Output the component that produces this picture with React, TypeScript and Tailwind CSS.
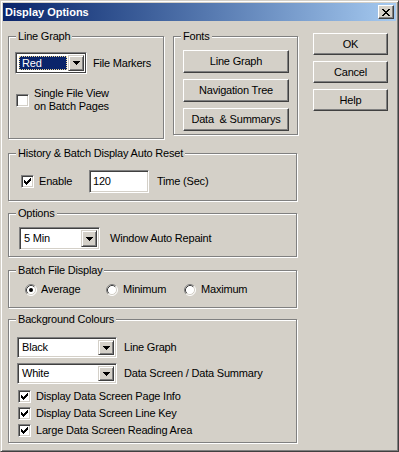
import React from "react";

const raised =
  "border border-t-white border-l-white border-r-[#404040] border-b-[#404040] shadow-[inset_-1px_-1px_0_#808080]";
const sunken =
  "border border-t-[#808080] border-l-[#808080] border-r-white border-b-white shadow-[inset_1px_1px_0_#404040,inset_-1px_-1px_0_#d4d0c8]";

function Check({ checked }: { checked?: boolean }) {
  return (
    <span className={`relative inline-block w-[13px] h-[13px] shrink-0 bg-white ${sunken}`}>
      {checked && (
        <svg width="7" height="7" viewBox="0 0 7 7" className="absolute left-[2px] top-[2px]" shapeRendering="crispEdges">
          <path
            fill="#000"
            d="M6 0h1v1h-1z M5 1h2v1h-2z M0 2h1v1h-1z M4 2h3v1h-3z M0 3h2v1h-2z M3 3h3v1h-3z M0 4h5v1h-5z M1 5h3v1h-3z M2 6h1v1h-1z"
          />
        </svg>
      )}
    </span>
  );
}

function Radio({ checked }: { checked?: boolean }) {
  return (
    <svg width="12" height="12" viewBox="0 0 12 12" className="shrink-0">
      <circle cx="6" cy="6" r="5" fill="#fff" />
      <path d="M9.89 2.11 A5.5 5.5 0 0 0 2.11 9.89" stroke="#808080" fill="none" />
      <path d="M2.11 9.89 A5.5 5.5 0 0 0 9.89 2.11" stroke="#fff" fill="none" />
      <path d="M9.18 2.82 A4.5 4.5 0 0 0 2.82 9.18" stroke="#404040" fill="none" />
      <path d="M2.82 9.18 A4.5 4.5 0 0 0 9.18 2.82" stroke="#d4d0c8" fill="none" />
      {checked && <circle cx="6" cy="6" r="2" fill="#000" />}
    </svg>
  );
}

function Arrow() {
  return (
    <svg width="7" height="4" viewBox="0 0 7 4" shapeRendering="crispEdges">
      <path fill="#000" d="M0 0h7v1h-7z M1 1h5v1h-5z M2 2h3v1h-3z M3 3h1v1h-1z" />
    </svg>
  );
}

function Combo({ value, className, focused }: { value: string; className: string; focused?: boolean }) {
  return (
    <div
      className={`flex p-[2px] bg-white border border-t-[#808080] border-l-[#808080] border-r-white border-b-white ${
        focused ? "shadow-[inset_0_0_0_1px_#404040]" : "shadow-[inset_1px_1px_0_#404040,inset_-1px_-1px_0_#d4d0c8]"
      } ${className}`}
    >
      <div className="flex-1 flex items-center min-w-0 p-[1px]">
        {focused ? (
          <div className="h-full w-full bg-[#0a246a] text-white flex items-center pl-[2px] border border-dotted border-[#f0d890]">
            {value}
          </div>
        ) : (
          <span className="pl-[1px]">{value}</span>
        )}
      </div>
      <div
        className="w-[16px] flex items-center justify-center bg-[#d4d0c8] border border-t-[#d4d0c8] border-l-[#d4d0c8] border-r-[#404040] border-b-[#404040] shadow-[inset_1px_1px_0_#fff,inset_-1px_-1px_0_#808080]"
      >
        <Arrow />
      </div>
    </div>
  );
}

function Btn({ children, className }: { children: React.ReactNode; className: string }) {
  return (
    <div className={`flex items-center justify-center bg-[#d4d0c8] ${raised} ${className}`}>
      {children}
    </div>
  );
}

function Group({
  label,
  className,
  children,
}: {
  label: string;
  className: string;
  children?: React.ReactNode;
}) {
  return (
    <div className={`relative border border-[#808080] shadow-[inset_1px_1px_0_#fff,1px_1px_0_#fff] ${className}`}>
      <span className="absolute -top-[7px] left-[7px] px-[2px] bg-[#d4d0c8] leading-[13px] whitespace-nowrap">
        {label}
      </span>
      {children}
    </div>
  );
}

export default function App() {
  return (
    <div
      className="w-[399px] h-[452px] bg-[#d4d0c8] p-[2px] border border-t-[#d4d0c8] border-l-[#d4d0c8] border-r-[#404040] border-b-[#404040] shadow-[inset_1px_1px_0_#fff,inset_-1px_-1px_0_#808080] font-['Liberation_Sans',Arial,sans-serif] text-[11px] leading-[13px] text-black overflow-hidden"
    >
      <div className="h-[18px] flex items-center justify-between bg-linear-to-r from-[#0a246a] to-[#a6caf0] pl-[2px] pr-[2px]">
        <span className="text-white font-bold text-[11px]">Display Options</span>
        <div className={`w-[16px] h-[14px] flex items-center justify-center bg-[#d4d0c8] ${raised}`}>
          <svg width="8" height="7" viewBox="0 0 8 7" shapeRendering="crispEdges">
            <path
              fill="#000"
              d="M0 0h2v1h-2z M6 0h2v1h-2z M1 1h2v1h-2z M5 1h2v1h-2z M2 2h4v1h-4z M3 3h2v1h-2z M2 4h4v1h-4z M1 5h2v1h-2z M5 5h2v1h-2z M0 6h2v1h-2z M6 6h2v1h-2z"
            />
          </svg>
        </div>
      </div>

      <div className="pl-[5px] tracking-[-0.2px]">
        <div className="flex items-start mt-[12px]">
          <Group label="Line Graph" className="mt-[3px] w-[156px] h-[103px] pt-[15px] pl-[6px]">
            <div className="flex items-center">
              <Combo value="Red" focused className="w-[72px] h-[22px]" />
              <span className="ml-[6px]">File Markers</span>
            </div>
            <div className="flex items-center mt-[13px] ml-[1px]">
              <Check />
              <span className="ml-[5px]">
                Single File View
                <br />
                on Batch Pages
              </span>
            </div>
          </Group>

          <Group label="Fonts" className="mt-[3px] ml-[9px] w-[125px] h-[99px] pt-[13px] pl-[9px]">
            <div className="flex flex-col gap-[6px]">
              <Btn className="w-[106px] h-[23px]">Line Graph</Btn>
              <Btn className="w-[106px] h-[23px]">Navigation Tree</Btn>
              <Btn className="w-[106px] h-[23px]">Data&nbsp; &amp; Summarys</Btn>
            </div>
          </Group>

          <div className="ml-[15px] flex flex-col gap-[6px]">
            <Btn className="w-[75px] h-[22px]">OK</Btn>
            <Btn className="w-[75px] h-[22px]">Cancel</Btn>
            <Btn className="w-[75px] h-[22px]">Help</Btn>
          </div>
        </div>

        <Group label="History & Batch Display Auto Reset" className="mt-[14px] w-[289px] h-[48px] pt-[16px] pl-[12px]">
          <div className="flex items-center">
            <Check checked />
            <span className="ml-[5px] w-[50px]">Enable</span>
            <div className={`w-[60px] h-[23px] bg-white flex items-center pl-[3px] ${sunken}`}>120</div>
            <span className="ml-[8px]">Time (Sec)</span>
          </div>
        </Group>

        <Group label="Options" className="mt-[12px] w-[289px] h-[44px] pt-[13px] pl-[10px]">
          <div className="flex items-center">
            <Combo value="5 Min" className="w-[81px] h-[23px]" />
            <span className="ml-[10px]">Window Auto Repaint</span>
          </div>
        </Group>

        <Group label="Batch File Display" className="mt-[13px] w-[289px] h-[38px] pt-[12px] pl-[16px]">
          <div className="flex items-center">
            <div className="w-[81px] flex items-center">
              <Radio checked />
              <span className="ml-[4px]">Average</span>
            </div>
            <div className="w-[78px] flex items-center">
              <Radio />
              <span className="ml-[5px]">Minimum</span>
            </div>
            <div className="flex items-center">
              <Radio />
              <span className="ml-[5px]">Maximum</span>
            </div>
          </div>
        </Group>

        <Group label="Background Colours" className="mt-[11px] w-[289px] h-[124px] pt-[17px] pl-[8px]">
          <div className="flex flex-col gap-[5px]">
            <div className="flex items-center">
              <Combo value="Black" className="w-[100px] h-[21px]" />
              <span className="ml-[7px]">Line Graph</span>
            </div>
            <div className="flex items-center">
              <Combo value="White" className="w-[100px] h-[21px]" />
              <span className="ml-[7px]">Data Screen / Data Summary</span>
            </div>
          </div>
          <div className="mt-[4px] flex flex-col">
            {["Display Data Screen Page Info", "Display Data Screen Line Key", "Large Data Screen Reading Area"].map((t) => (
              <div key={t} className="h-[17px] flex items-center ml-[1px]">
                <Check checked />
                <span className="ml-[5px]">{t}</span>
              </div>
            ))}
          </div>
        </Group>
      </div>
    </div>
  );
}
